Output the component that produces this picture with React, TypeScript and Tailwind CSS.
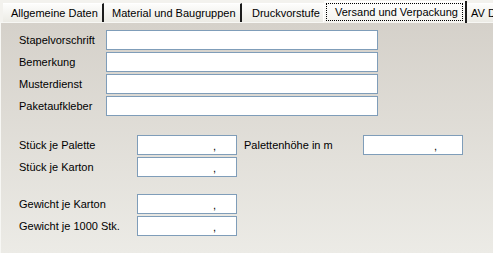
import React from "react";

const font = { fontFamily: '"Liberation Sans", Arial, sans-serif' };

function Tab({ label, w }: { label: string; w: string }) {
  return (
    <div
      className={`${w} h-[19px] shrink-0 flex items-center pl-[8px] bg-linear-to-b from-[#fdfdfc] to-[#ecebe5] border-t border-white border-r-2 border-r-[#1c1c1c] text-[11px] text-black leading-none whitespace-nowrap`}
    >
      {label}
    </div>
  );
}

function Box({ w, pr }: { w: string; pr: string }) {
  return (
    <div
      className={`${w} h-[20px] shrink-0 border border-[#7f9db9] bg-white flex items-center justify-end ${pr} text-[11px] leading-none text-black`}
    >
      <span className="relative top-[1px]">,</span>
    </div>
  );
}

function TextRow({ label, first }: { label: string; first?: boolean }) {
  return (
    <div className={`flex items-center h-[20px] ${first ? "" : "mt-[2px]"}`}>
      <div className="w-[87px] shrink-0 text-[11px] leading-none">{label}</div>
      <div className="w-[272px] h-[20px] border border-[#7f9db9] bg-white" />
    </div>
  );
}

export default function App() {
  return (
    <div className="w-[493px] h-[253px] overflow-hidden flex flex-col bg-[#f3f2ee] text-black" style={font}>
      <div className="h-[22px] shrink-0 flex items-end pl-[3px]">
        <Tab label="Allgemeine Daten" w="w-[101px]" />
        <Tab label="Material und Baugruppen" w="w-[138px]" />
        <div className="w-[82px] h-[19px] shrink-0 flex items-center pl-[10px] bg-linear-to-b from-[#fdfdfc] to-[#ecebe5] border-t border-white border-r border-r-white text-[11px] leading-none whitespace-nowrap">
          Druckvorstufe
        </div>
        <div className="relative z-10 w-[143px] h-[22px] -mb-px shrink-0 bg-linear-to-b from-[#fefefe] to-[#f4f3ef] border-r-2 border-r-[#1c1c1c] px-[2px] pt-[2px] pb-[2px]">
          <div className="h-full border border-dotted border-black flex items-center pl-[8px] text-[11px] leading-none whitespace-nowrap">
            Versand und Verpackung
          </div>
        </div>
        <div className="w-[60px] h-[19px] shrink-0 flex items-center pl-[4px] bg-linear-to-b from-[#fdfdfc] to-[#ecebe5] border-t border-white text-[11px] leading-none whitespace-nowrap">
          AV Daten
        </div>
      </div>
      <div className="flex-1 border-t border-l border-[#f7f7f4] bg-linear-to-b from-[#d5d1ca] to-[#ecebe6] pt-[7px] pl-[18px]">
        <TextRow label="Stapelvorschrift" first />
        <TextRow label="Bemerkung" />
        <TextRow label="Musterdienst" />
        <TextRow label="Paketaufkleber" />

        <div className="mt-[19px] flex items-center h-[20px]">
          <div className="w-[118px] shrink-0 text-[11px] leading-none">Stück je Palette</div>
          <Box w="w-[100px]" pr="pr-[20px]" />
          <div className="ml-[7px] w-[119px] shrink-0 text-[11px] leading-none">Palettenhöhe in m</div>
          <Box w="w-[100px]" pr="pr-[25px]" />
        </div>
        <div className="mt-[2px] flex items-center h-[20px]">
          <div className="w-[118px] shrink-0 text-[11px] leading-none">Stück je Karton</div>
          <Box w="w-[100px]" pr="pr-[20px]" />
        </div>

        <div className="mt-[17px] flex items-center h-[20px]">
          <div className="w-[118px] shrink-0 text-[11px] leading-none">Gewicht je Karton</div>
          <Box w="w-[100px]" pr="pr-[20px]" />
        </div>
        <div className="mt-[2px] flex items-center h-[20px]">
          <div className="w-[118px] shrink-0 text-[11px] leading-none">Gewicht je 1000 Stk.</div>
          <Box w="w-[100px]" pr="pr-[20px]" />
        </div>
      </div>
    </div>
  );
}
